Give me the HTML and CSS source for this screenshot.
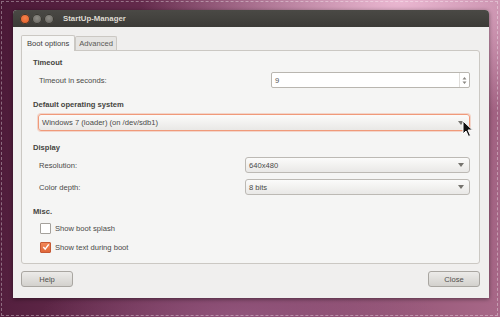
FILE: index.html
```html
<!DOCTYPE html>
<html lang="en">
<head>
<meta charset="UTF-8">
<title>StartUp-Manager</title>
<link rel="stylesheet" href="styles.css">
</head>
<body>
    <div class="desktop">
        <div class="window">
            <div class="titlebar">
                <span class="wbtn close"></span>
                <span class="wbtn"></span>
                <span class="wbtn"></span>
                <span class="title">StartUp-Manager</span>
            </div>
            <div class="client">
                <div class="tabs">
                    <div class="tab active">Boot options</div>
                    <div class="tab">Advanced</div>
                </div>
                <div class="notebook">
                    <div class="section">
                        <div class="heading">Timeout</div>
                        <div class="row">
                            <span class="label">Timeout in seconds:</span>
                            <div class="spin">
                                <span class="value">9</span>
                                <span class="arrows">
                                    <svg width="5" height="9" viewBox="0 0 5 9"><path d="M0.5 3.5 L2.5 1 L4.5 3.5 Z M0.5 5.5 L2.5 8 L4.5 5.5 Z" fill="#8a8782"/></svg>
                                </span>
                            </div>
                        </div>
                    </div>
                    <div class="section">
                        <div class="heading">Default operating system</div>
                        <div class="combo wide focus">
                            <span>Windows 7 (loader) (on /dev/sdb1)</span>
                            <span class="arrow"></span>
                        </div>
                    </div>
                    <div class="section">
                        <div class="heading">Display</div>
                        <div class="row">
                            <span class="label">Resolution:</span>
                            <div class="combo half"><span>640x480</span><span class="arrow"></span></div>
                        </div>
                        <div class="row">
                            <span class="label">Color depth:</span>
                            <div class="combo half"><span>8 bits</span><span class="arrow"></span></div>
                        </div>
                    </div>
                    <div class="section">
                        <div class="heading">Misc.</div>
                        <label class="check"><span class="box"></span>Show boot splash</label>
                        <label class="check"><span class="box on">
                            <svg width="9" height="9" viewBox="0 0 9 9"><path d="M1.5 4.5 L3.6 7 L7.6 1.6" stroke="#fff" stroke-width="1.6" fill="none"/></svg>
                        </span>Show text during boot</label>
                    </div>
                </div>
                <div class="buttons">
                    <button>Help</button>
                    <button>Close</button>
                </div>
            </div>
        </div>
        <svg class="cursor" width="12" height="18" viewBox="0 0 12 18">
            <path d="M1 1 L1 14 L4 11 L6.5 16.5 L8.5 15.5 L6 10 L10.5 10 Z" fill="#111" stroke="#fff" stroke-width="1"/>
        </svg>
    </div>
</body>
</html>
```

FILE: styles.css
```css
body {
    margin: 0;
    padding: 0;
    font-family: "Liberation Sans", Arial, sans-serif;
    font-size: 7.6px;
    color: #3c3c3c;
}
.desktop {
    position: relative;
    width: 500px;
    height: 317px;
    box-sizing: border-box;
    padding: 10px 11px 19px 13px;
    background:
        radial-gradient(ellipse 260px 120px at 400px 0px, rgba(240,190,215,0.95), rgba(240,190,215,0) 100%),
        radial-gradient(ellipse 200px 60px at 240px 317px, rgba(150,90,130,0.8), rgba(150,90,130,0) 100%),
        linear-gradient(100deg, #4a1836 0%, #76385b 45%, #a86888 100%);
}
.desktop::before {
    content: "";
    position: absolute;
    top: 1px;
    left: 1px;
    right: 2px;
    bottom: 1px;
    border: 1px dashed rgba(255,255,255,0.35);
}
.window {
    position: relative;
    height: 288px;
    display: flex;
    flex-direction: column;
    background: #f0efee;
    border-radius: 4px 4px 0 0;
    box-shadow: 0 1px 4px rgba(0,0,0,0.45);
}
.titlebar {
    height: 17px;
    display: flex;
    align-items: center;
    padding-left: 7px;
    background: linear-gradient(#4a4945, #3c3b37);
    border-radius: 4px 4px 0 0;
}
.wbtn {
    width: 10px;
    height: 10px;
    border-radius: 50%;
    margin-right: 2px;
    background: radial-gradient(circle at 50% 40%, #8e8c86, #5c5a55);
    box-shadow: inset 0 0 0 1px #36352f;
}
.wbtn.close {
    background: radial-gradient(circle at 50% 40%, #f7824c, #d9531e);
}
.title {
    margin-left: 7px;
    font-weight: bold;
    font-size: 7.8px;
    color: #dfdbd2;
}
.client {
    flex: 1;
    display: flex;
    flex-direction: column;
    padding: 8px 9px 8px 8px;
}
.tabs {
    display: flex;
    align-items: flex-end;
    height: 15px;
}
.tab {
    height: 13px;
    line-height: 13px;
    padding: 0 3px;
    border: 1px solid #cbc8c3;
    border-bottom: none;
    border-radius: 2px 2px 0 0;
    background: #e6e5e3;
    color: #5a5955;
}
.tab.active {
    height: 15px;
    line-height: 15px;
    padding: 0 5px;
    background: #f6f6f5;
    color: #3c3c3c;
    position: relative;
    top: 1px;
    z-index: 1;
}
.notebook {
    height: 206px;
    border: 1px solid #cbc8c3;
    border-radius: 0 3px 3px 3px;
    background: #f5f5f4;
    padding: 6px 9px 0 11px;
}
.section + .section {
    margin-top: 11px;
}
.heading {
    font-weight: bold;
    height: 12px;
    line-height: 12px;
    margin-bottom: 3px;
    color: #45453f;
}
.row {
    display: flex;
    justify-content: space-between;
    align-items: center;
    padding-left: 6px;
    height: 16px;
    margin-bottom: 6px;
}
.label {
    color: #4a4a48;
}
.spin {
    width: 197px;
    height: 14px;
    display: flex;
    align-items: center;
    justify-content: space-between;
    border: 1px solid #b9b6b0;
    border-radius: 2px;
    background: #fff;
}
.spin .value {
    padding-left: 3px;
    color: #555;
}
.arrows {
    display: flex;
    align-items: center;
    height: 100%;
    padding: 0 2px;
    border-left: 1px solid #e0dedb;
}
.combo {
    display: flex;
    align-items: center;
    justify-content: space-between;
    height: 14px;
    padding: 0 5px 0 3px;
    border: 1px solid #bcb9b4;
    border-radius: 3px;
    background: linear-gradient(#fbfbfa, #e9e8e6);
    color: #4a4a48;
}
.combo.wide {
    margin-left: 5px;
    height: 15px;
}
.combo.focus {
    border-color: #f09a7a;
    box-shadow: 0 0 0 1px rgba(240,154,122,0.35);
}
.combo.half {
    width: 215px;
}
.arrow {
    width: 0;
    height: 0;
    border-left: 3px solid transparent;
    border-right: 3px solid transparent;
    border-top: 4px solid #75736e;
}
.check {
    display: flex;
    align-items: center;
    height: 14px;
    margin-left: 7px;
    margin-bottom: 5px;
    color: #4a4a48;
}
.box {
    width: 9px;
    height: 9px;
    margin-right: 4px;
    border: 1px solid #a4a19c;
    border-radius: 1px;
    background: #fff;
    display: flex;
    align-items: center;
    justify-content: center;
}
.box.on {
    border-color: #c65a35;
    background: linear-gradient(#f28858, #e0673a);
}
.box svg {
    width: 8px;
    height: 8px;
}
.buttons {
    display: flex;
    justify-content: space-between;
    margin-top: 7px;
}
button {
    width: 52px;
    height: 16px;
    padding: 0;
    font-family: "Liberation Sans", Arial, sans-serif;
    font-size: 7.6px;
    color: #4f4e4a;
    border: 1px solid #a9a6a1;
    border-radius: 3px;
    background: linear-gradient(#ecebe9, #d3d1cd);
}
.cursor {
    position: absolute;
    left: 462px;
    top: 120px;
}
```
